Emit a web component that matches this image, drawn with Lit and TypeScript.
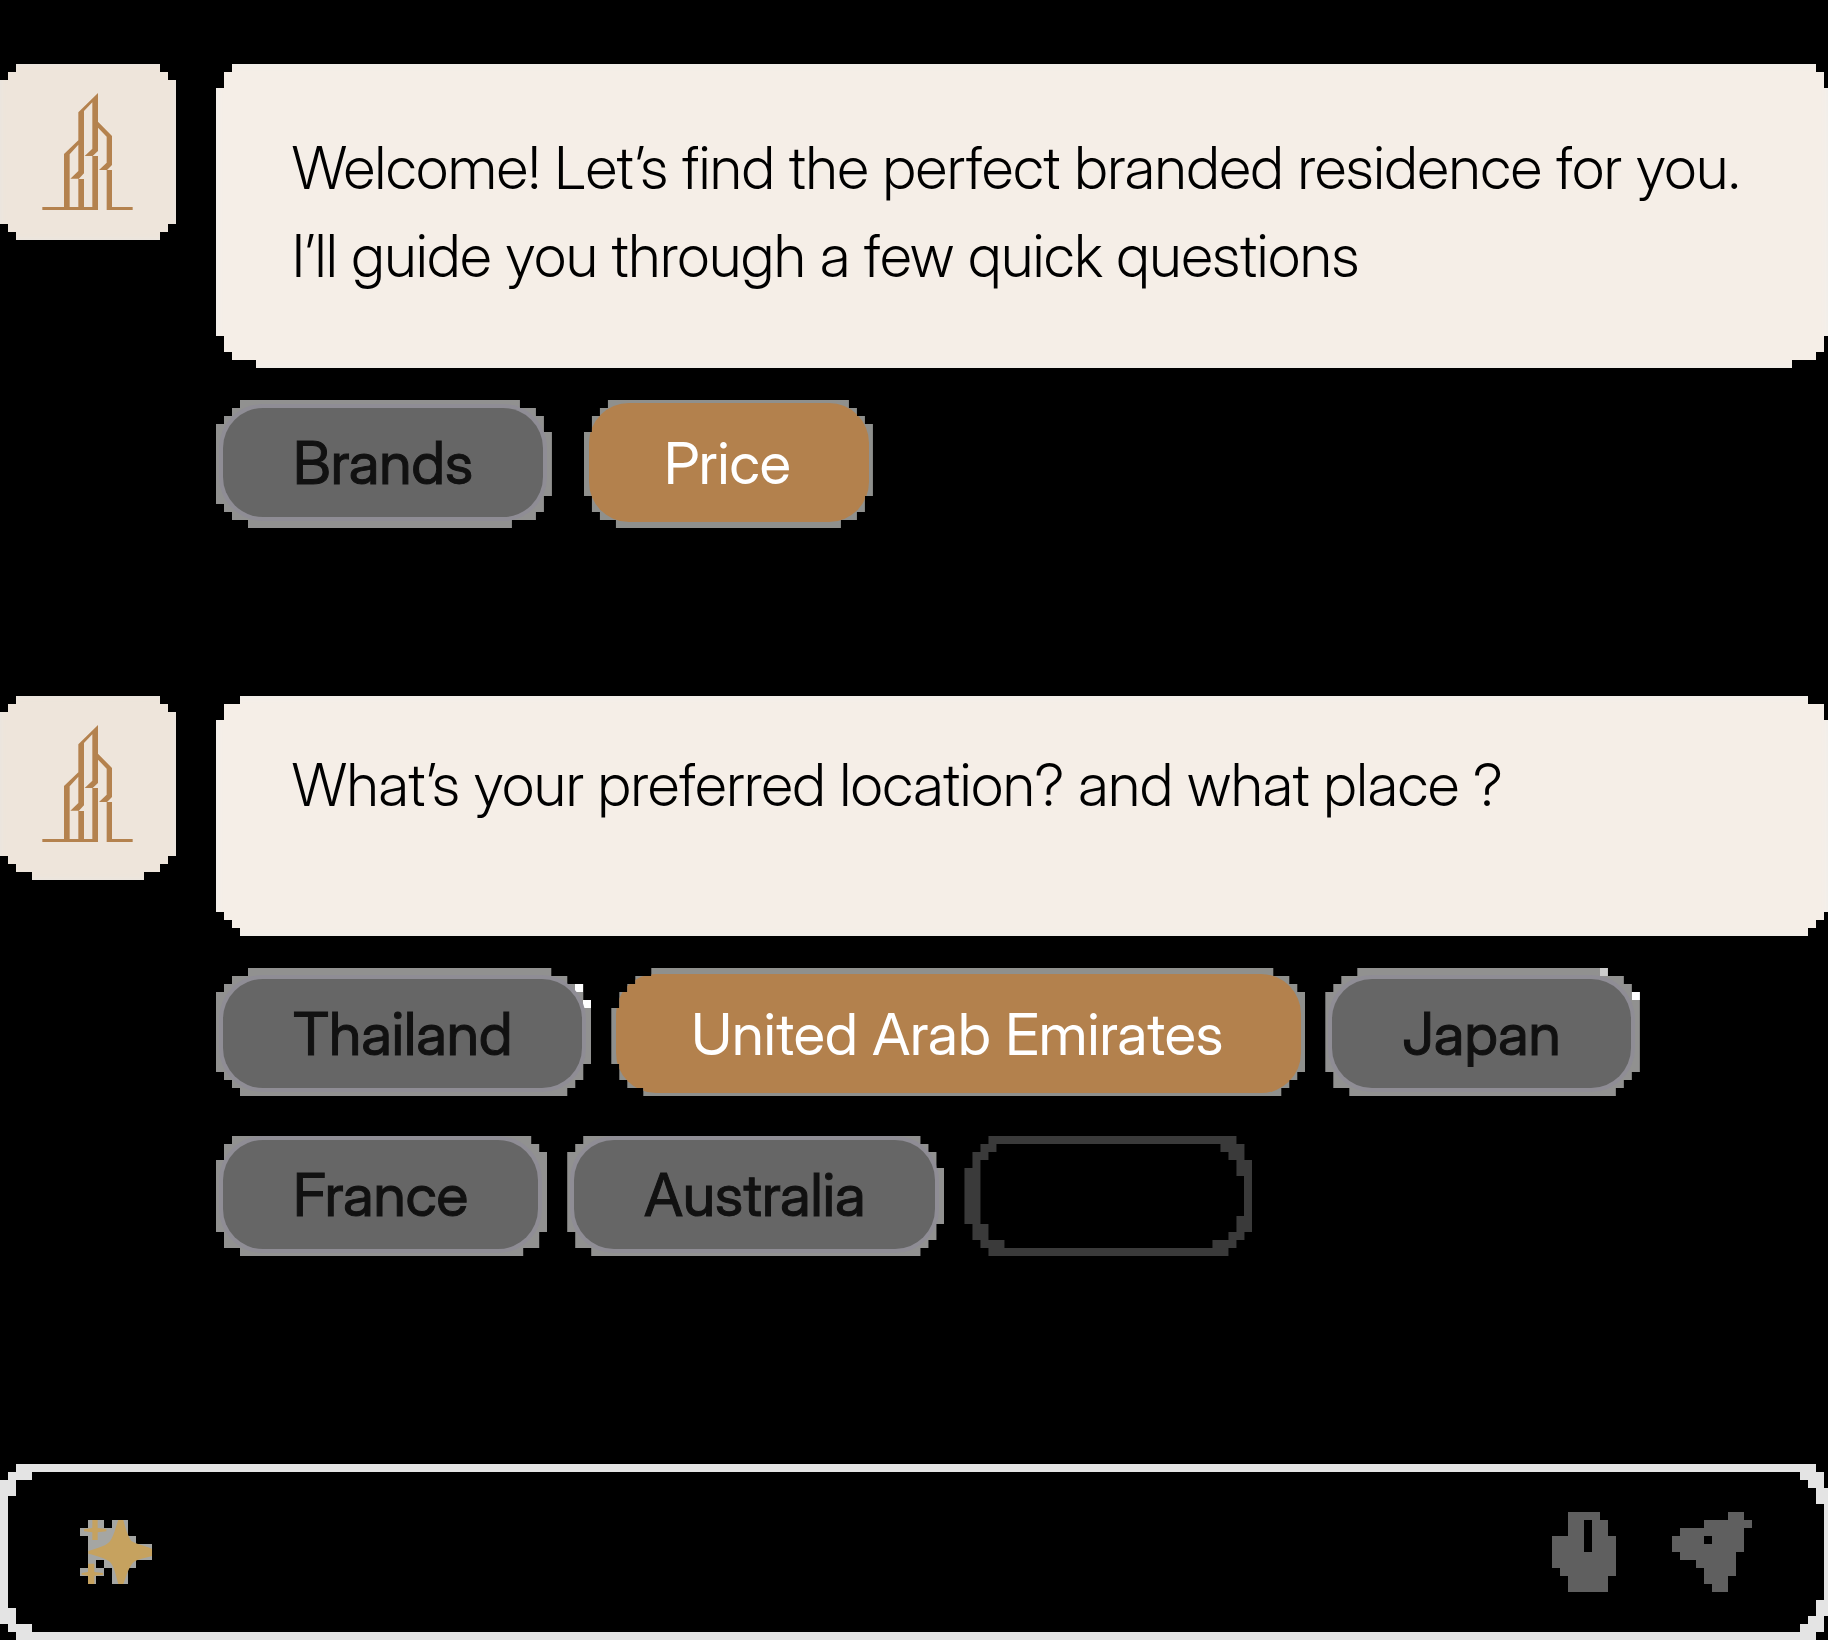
import { LitElement, html, css, svg, nothing } from "lit";
import { customElement, property, state } from "lit/decorators.js";

/** One corner, from its outer edge inwards: [horizontal inset, reach from the edge]. */
type Corner = [number, number][];
/** Corners in the order top-left, top-right, bottom-right, bottom-left. */
type Frame = [Corner, Corner, Corner, Corner];

/** Builds a polygon whose corners go down in square steps. */
function stepped([tl, tr, br, bl]: Frame): string {
  const pts: string[] = [];
  const add = (c: Corner, right: boolean, bottom: boolean, outwards: boolean) => {
    const part: string[] = [];
    const px = (n: number) => (right ? `calc(100% - ${n}px)` : `${n}px`);
    const py = (n: number) => (bottom ? `calc(100% - ${n}px)` : `${n}px`);
    let y = 0;
    for (const [x, reach] of c) {
      part.push(`${px(x)} ${py(y)}`, `${px(x)} ${py(reach)}`);
      y = reach;
    }
    part.push(`${px(0)} ${py(y)}`);
    pts.push(...(outwards ? part : part.reverse()));
  };
  add(tl, false, false, false);
  add(tr, true, false, true);
  add(br, true, true, false);
  add(bl, false, true, true);
  return `clip-path: polygon(${pts.join(", ")})`;
}

interface Option {
  label: string;
  selected?: boolean;
  tone?: string;
  frame: Frame;
}

interface Message {
  lines: string[];
  size: string;
  avatar: Frame;
  bubble: Frame;
  rows: { kind: string; options: Option[] }[];
}

const A: Corner = [[16, 8], [8, 16]];
const B: Corner = [[24, 8], [16, 16], [8, 24]];
const C: Corner = [[32, 8], [16, 16], [8, 24]];

const MESSAGES: Message[] = [
  {
    lines: ["Welcome! Let’s find the perfect branded residence for you.", "I’ll guide you through a few quick questions"],
    size: "long",
    avatar: [A, A, A, A],
    bubble: [
      [[16, 8], [8, 24]],
      [[12, 8], [4, 24]],
      [[36, 8], [12, 16], [4, 32]],
      [[40, 8], [16, 16], [8, 32]],
    ],
    rows: [
      {
        kind: "wide",
        options: [
          { label: "Brands", frame: [B, [[32, 8], [16, 16], [8, 32]], [[40, 8], [16, 16], [8, 32]], C] },
          {
            label: "Price",
            selected: true,
            frame: [
              [[24, 8], [16, 16], [8, 32]],
              B,
              [[32, 8], [16, 16], [8, 32]],
              [[32, 8], [16, 16], [8, 32]],
            ],
          },
        ],
      },
    ],
  },
  {
    lines: ["What’s your preferred location? and what place ?"],
    size: "short",
    avatar: [A, A, [[32, 8], [16, 16], [8, 24]], [[32, 8], [16, 16], [8, 24]]],
    bubble: [
      [[24, 8], [8, 24]],
      [[20, 8], [4, 24]],
      [[20, 8], [12, 16], [4, 24]],
      B,
    ],
    rows: [
      {
        kind: "high",
        options: [
          { label: "Thailand", tone: "glint-a", frame: [C, [[40, 8], [24, 16], [8, 32]], [[24, 8], [16, 16], [8, 32]], B] },
          {
            label: "United Arab Emirates",
            selected: true,
            frame: [[[40, 8], [24, 16], [16, 24], [8, 40]], C, B, [[32, 8], [16, 16], [8, 32]]],
          },
          { label: "Japan", tone: "glint-b", frame: [C, C, B, [[24, 8], [8, 24]]] },
        ],
      },
      {
        kind: "low",
        options: [
          { label: "France", frame: [[[16, 8], [8, 24]], [[16, 8], [8, 16]], [[24, 8], [8, 24]], [[24, 8], [8, 24]]] },
          {
            label: "Australia",
            frame: [[[16, 8], [8, 16]], [[24, 8], [16, 16], [8, 32]], [[24, 8], [16, 16], [8, 32]], [[24, 8], [8, 24]]],
          },
          {
            label: "",
            tone: "blank",
            frame: [[[24, 8], [16, 16], [8, 32]], [[16, 8], [8, 24]], B, [[24, 8], [16, 16], [8, 32]]],
          },
        ],
      },
    ],
  },
];

const BLANK_HOLE: Frame = [
  [[16, 8], [8, 16]],
  [[24, 8], [16, 16], [8, 32]],
  [[32, 8], [16, 16], [8, 32]],
  [[24, 8], [8, 24]],
];

const COMPOSER: Frame = [A, [[12, 8], [4, 24]], [[12, 8], [4, 24]], A];
const COMPOSER_HOLE: Frame = [
  [[24, 8], [8, 24]],
  [[24, 8], [16, 16], [8, 32]],
  [[24, 8], [16, 16], [8, 32]],
  [[24, 8], [8, 24]],
];

const towers = svg`
  <path fill="#b4824e" d="M192 471V312L235 271V187L294 129V215L336 258V345L321 360H336V471H398V480H320V360H297L320 338V260L294 233V303L278 318H294V480H127V471ZM209 471H235V386H211L235 363V284L209 313ZM252 471H277V318H254L277 296V157L252 183V370L236 387H252Z"/>`;

@customElement("choice-chip")
export class ChoiceChip extends LitElement {
  @property({ attribute: false }) option!: Option;

  static styles = css`
    :host { display: flex; }
    .frame {
      display: flex;
      padding: var(--rim-top) 9px var(--rim-bottom) 7px;
      background-color: #919190;
      background-repeat: no-repeat;
    }
    .frame.selected {
      padding: var(--rim-top-on) 4px var(--rim-bottom-on) 5px;
      background-color: #8f908d;
    }
    .glint-a {
      background-image: linear-gradient(#fff, #fff), linear-gradient(#fff, #fff);
      background-size: 8px 8px;
      background-position: right 8px top 16px, right 0 top 32px;
    }
    .glint-b {
      background-image: linear-gradient(#ccc, #ccc), linear-gradient(#fff, #fff);
      background-size: 8px 8px;
      background-position: right 32px top 0, right 0 top 24px;
    }
    .frame.blank { padding: 8px 8px 8px 16px; background-color: #3a3a3a; }
    .pill {
      margin: 0;
      border: 0;
      padding: 0 70px;
      border-radius: 40px;
      background: #666;
      box-shadow: 0 0 0 4px #8f8d95;
      color: #111;
      font: 400 59px/1 "Inter Display", Inter, "Liberation Sans", sans-serif;
      -webkit-text-stroke: 1px #111;
      white-space: nowrap;
      cursor: pointer;
    }
    .selected .pill {
      padding: 0 78px 0 75px;
      background: #b3814d;
      box-shadow: none;
      color: #fff;
      font-size: 58px;
      -webkit-text-stroke: 0;
    }
    .blank .pill {
      width: 264px;
      padding: 0;
      border-radius: 0;
      background: #000;
      box-shadow: none;
    }
  `;

  render() {
    const o = this.option;
    return html`<div class="frame ${o.selected ? "selected" : ""} ${o.tone ?? ""}" style=${stepped(o.frame)}>
      <button
        class="pill"
        type="button"
        aria-pressed=${o.selected ? "true" : "false"}
        style=${o.tone === "blank" ? stepped(BLANK_HOLE) : nothing}
      >${o.label}</button>
    </div>`;
  }
}

@customElement("app-root")
export class AppRoot extends LitElement {
  @state() private draft = "";

  static styles = css`
    :host {
      display: block;
      background: #000;
      font-family: "Inter Display", Inter, "Liberation Sans", sans-serif;
    }
    .page {
      display: flex;
      flex-direction: column;
      box-sizing: border-box;
      min-height: 100vh;
      padding-top: 64px;
      overflow: hidden;
    }
    .thread {
      display: flex;
      flex-direction: column;
      gap: 168px;
      padding-bottom: 208px;
    }
    .message {
      display: grid;
      grid-template-columns: 176px minmax(0, 1fr);
      column-gap: 40px;
      align-items: start;
    }
    .avatar {
      height: 176px;
      background: #eee5db;
      box-shadow: inset 0 0 6px #e8e6e2;
    }
    .avatar.short { height: 184px; }
    .mark { display: block; width: 176px; height: 176px; }
    .body { display: flex; flex-direction: column; gap: 32px; }
    .bubble {
      padding: 60px 0 68px 76px;
      background: #f5eee7;
      box-shadow: inset 0 0 8px #efefed;
      color: #000;
      font-weight: 300;
      font-size: 59px;
      line-height: 88px;
    }
    .bubble.short { padding: 45px 0 107px 76px; }
    .line { margin: 0; white-space: nowrap; }
    .rows { display: flex; flex-direction: column; gap: 40px; }
    .row { display: flex; height: 128px; gap: 20px; }
    .row.wide {
      gap: 32px;
      --rim-top: 8px;
      --rim-bottom: 11px;
      --rim-top-on: 3px;
      --rim-bottom-on: 6px;
    }
    .row.high {
      --rim-top: 11px;
      --rim-bottom: 8px;
      --rim-top-on: 6px;
      --rim-bottom-on: 3px;
    }
    .row.low {
      height: 120px;
      --rim-top: 4px;
      --rim-bottom: 7px;
    }
    .composer { background: #e4e4e4; padding: 8px 4px 8px 8px; }
    .field {
      display: flex;
      align-items: center;
      box-sizing: border-box;
      height: 160px;
      padding: 0 72px;
      background: #000;
    }
    .spark { width: 72px; height: 64px; flex: none; }
    .entry {
      flex: 1;
      min-width: 0;
      margin: 0 32px;
      border: 0;
      outline: 0;
      background: transparent;
      color: #e4e4e4;
      font: 300 59px/88px "Inter Display", Inter, "Liberation Sans", sans-serif;
    }
    .tools { display: flex; gap: 56px; }
    .tool {
      display: block;
      margin: 0;
      border: 0;
      padding: 0;
      background: none;
      cursor: pointer;
    }
    .glyph { display: block; height: 80px; fill: #5f5f5f; }
    .mic { width: 64px; }
    .send { width: 80px; }
  `;

  private renderMessage(m: Message) {
    return html`<section class="message">
      <div class="avatar ${m.size}" style=${stepped(m.avatar)}>
        <svg class="mark" viewBox="0 42 528 528" aria-hidden="true">${towers}</svg>
      </div>
      <div class="body">
        <div class="bubble ${m.size}" style=${stepped(m.bubble)}>
          ${m.lines.map((l) => html`<p class="line">${l}</p>`)}
        </div>
        <div class="rows">
          ${m.rows.map(
            (r) => html`<div class="row ${r.kind}">
              ${r.options.map((o) => html`<choice-chip .option=${o}></choice-chip>`)}
            </div>`,
          )}
        </div>
      </div>
    </section>`;
  }

  render() {
    return html`<main class="page">
      <div class="thread">${MESSAGES.map((m) => this.renderMessage(m))}</div>
      <form class="composer" style=${stepped(COMPOSER)} @submit=${(e: Event) => e.preventDefault()}>
        <div class="field" style=${stepped(COMPOSER_HOLE)}>
          <svg class="spark" viewBox="240 210 216 192" aria-hidden="true">
            <path fill="#a5a6a3" d="M264 210H312V234H336V210H384V258H408V282H456V330H408V354H384V402H336V354H312V330H288V354H312V378H288V402H264V378H240V354H264V258H240V234H264Z"/>
            <path fill="#c6a25f" d="M355 210H370C376 234 382 254 393 272C410 283 430 285 456 296V318C432 324 414 328 402 335C386 350 380 376 370 402H355C347 376 344 352 332 338C318 324 292 318 265 311V303C292 294 314 290 328 276C342 260 346 232 355 210ZM277 210H293V234L319 237V244L293 247V270H277V247L252 244V238L277 234ZM264 341H283V366L309 369V374L283 377V402H264V377L245 374V369L264 366Z"/>
          </svg>
          <input
            class="entry"
            type="text"
            aria-label="Message"
            .value=${this.draft}
            @input=${(e: Event) => (this.draft = (e.target as HTMLInputElement).value)}
          />
          <div class="tools">
            <button class="tool" type="button" aria-label="Voice">
              <svg class="glyph mic" viewBox="0 0 64 80" aria-hidden="true">
                <path fill-rule="evenodd" d="M16 0H48V8H56V24H64V64H56V80H16V64H8V56H0V24H16ZM32 8V40H40V8Z"/>
              </svg>
            </button>
            <button class="tool" type="submit" aria-label="Send">
              <svg class="glyph send" viewBox="0 0 80 80" aria-hidden="true">
                <path fill-rule="evenodd" d="M56 0H72V8H80V16H72V40H64V64H56V80H40V72H32V56H24V48H8V40H0V24H8V16H32V8H56ZM32 24V32H40V24Z"/>
              </svg>
            </button>
          </div>
        </div>
      </form>
    </main>`;
  }
}
